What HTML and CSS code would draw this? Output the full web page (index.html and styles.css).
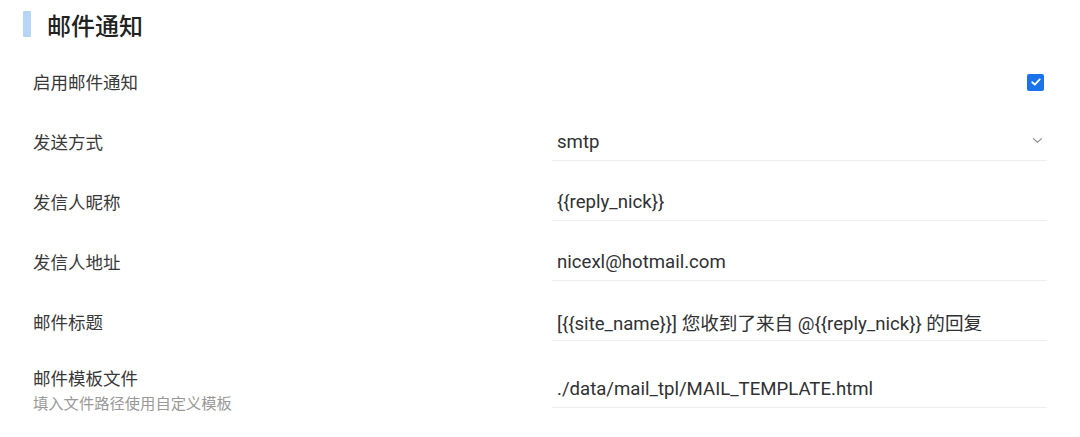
FILE: index.html
```html
<!DOCTYPE html>
<html lang="zh-CN">
<head>
<meta charset="utf-8">
<link rel="stylesheet" href="styles.css">
</head>
<body>
<div class="panel">
  <div class="header">
    <span class="bar"></span>
    <h2 class="title">邮件通知</h2>
  </div>
  <div class="row">
    <div class="label">启用邮件通知</div>
    <div class="control control-check">
      <span class="checkbox">
        <svg viewBox="0 0 16 16" width="12" height="12"><path d="M3 8.3 L6.4 11.5 L13 4.6" fill="none" stroke="#fff" stroke-width="2.4" stroke-linecap="round" stroke-linejoin="round"/></svg>
      </span>
    </div>
  </div>
  <div class="row">
    <div class="label">发送方式</div>
    <div class="control">
      <div class="field select"><span>smtp</span>
        <svg class="chev" viewBox="0 0 12 8" width="11" height="7"><path d="M1 1.5 L6 6 L11 1.5" fill="none" stroke="#888" stroke-width="1.2"/></svg>
      </div>
    </div>
  </div>
  <div class="row">
    <div class="label">发信人昵称</div>
    <div class="control"><div class="field">{{reply_nick}}</div></div>
  </div>
  <div class="row">
    <div class="label">发信人地址</div>
    <div class="control"><div class="field">nicexl@hotmail.com</div></div>
  </div>
  <div class="row">
    <div class="label">邮件标题</div>
    <div class="control"><div class="field">[{{site_name}}] 您收到了来自 @{{reply_nick}} 的回复</div></div>
  </div>
  <div class="row row-tall">
    <div class="label">邮件模板文件<div class="hint">填入文件路径使用自定义模板</div></div>
    <div class="control"><div class="field">./data/mail_tpl/MAIL_TEMPLATE.html</div></div>
  </div>
</div>
</body>
</html>
```
FILE: styles.css
```css
* { box-sizing: border-box; }
html, body { margin: 0; padding: 0; background: #fff; }
body {
  font-family: Roboto, "Noto Sans CJK SC", "Noto Sans", sans-serif;
  color: #303133;
}
.panel { width: 1080px; padding: 0 33px 0 0; }
.header {
  height: 52px;
  display: flex;
  align-items: center;
  padding-left: 23px;
}
.bar {
  width: 8px;
  height: 26px;
  background: #b7d6f6;
  border-radius: 1px;
  margin-right: 16px;
  margin-top: -4px;
}
.title {
  margin: 0;
  margin-top: -4px;
  font-family: "Noto Sans CJK SC", sans-serif;
  font-size: 24px;
  font-weight: 500;
  color: #222;
}
.row {
  height: 60px;
  display: grid;
  grid-template-columns: 519px 495px;
  align-items: center;
  padding-left: 33px;
}
.row-tall { height: 74px; }
.label {
  font-family: "Noto Sans CJK SC", sans-serif;
  font-size: 17.5px;
  color: #383838;
  line-height: 24px;
}
.hint {
  font-size: 15.3px;
  color: #999;
  line-height: 22px;
  margin-top: 1px;
}
.control { display: flex; align-items: center; }
.control-check { justify-content: flex-end; padding-right: 3px; }
.checkbox {
  width: 17px;
  height: 17px;
  background: #1a73e8;
  border-radius: 2px;
  display: flex;
  align-items: center;
  justify-content: center;
}
.field {
  width: 100%;
  height: 37px;
  border-bottom: 1px solid #eceef1;
  display: flex;
  align-items: center;
  padding-left: 5px;
  font-size: 18.6px;
  color: #303133;
}
.select { justify-content: space-between; padding-right: 4px; }
.chev { margin-top: -2px; }
```
